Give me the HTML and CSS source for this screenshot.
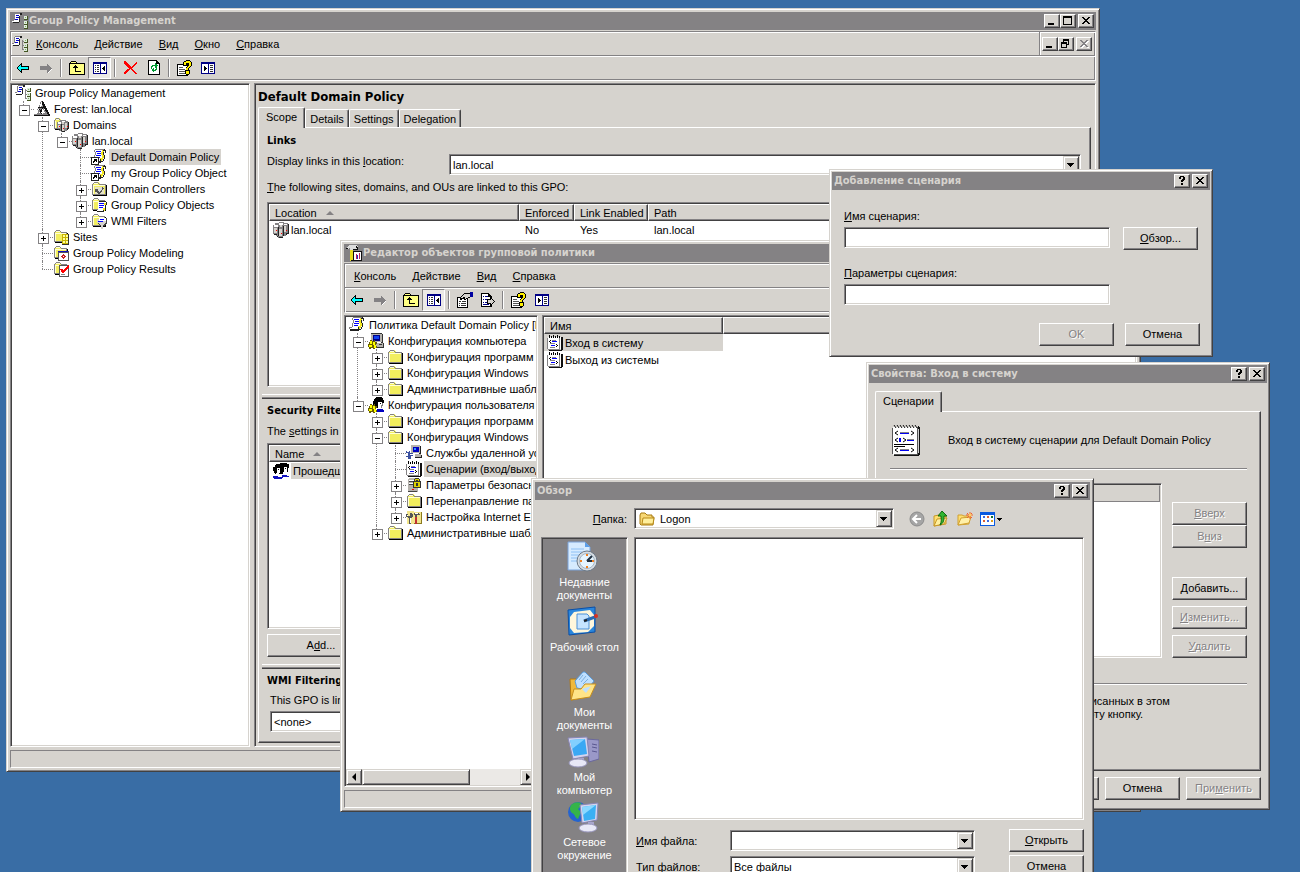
FILE: index.html
```html
<!DOCTYPE html>
<html lang="ru">
<head>
    <meta charset="UTF-8">
    <meta name="viewport" content="width=device-width, initial-scale=1.0">
    <title>Group Policy Management</title>
    <link rel="stylesheet" href="styles.css">
</head>
<body>
    <!-- icons -->
    <svg class="sprite" aria-hidden="true">
        <symbol id="i-gpm" viewBox="0 0 16 16">
            <path d="M3 0h7v2h-2v5h-1v2H0V7h2V2h1z" fill="#fff"/>
            <path d="M3 0h6v1H3zM2 1h1v6H2zM0 7h2v1H0z" fill="#848284"/>
            <path d="M4 2h3v1H4zM4 4h3v1H4zM3 6h3v1H3z" fill="#00c"/>
            <path d="M8 0h2v2H8zM7 3h1v4H7zM1 9h6v1H1zM7 7h1v2H7z" fill="#222"/>
            <path d="M10 4h1v10h-1zM10 5h3v1h-3zM10 9h3v1h-3zM10 13h3v1h-3z" fill="#848284"/>
            <path d="M12 3h3v3h-3zM12 8h3v3h-3zM12 12h3v3h-3z" fill="#ded"/>
            <path d="M15 3h1v4h-4V6h3zM15 8h1v4h-4v-1h3zM15 12h1v4h-4v-1h3z" fill="#452"/>
            <path d="M13 4h1v1h-1zM13 9h1v1h-1zM13 13h1v1h-1z" fill="#8a6"/>
        </symbol>
        <symbol id="i-forest" viewBox="0 0 16 16">
            <path d="M7 0h2l2 5 5 9v1H0v-1l5-8z" fill="#848284"/>
            <path d="M7 1h1v3l-2 2zM4 8l1 0-2 5H1zM10 8l1 0-2 5H8z" fill="#fff"/>
            <path d="M8 7l3 5H5z" fill="#fff"/>
            <path d="M8 0h1l3 6 4 8v1H0v-1h14L10 7 8 3zM4 6h7v1H4zM5 8h1l2 5H7zM8 7h1l-2 5H6z" fill="#111"/>
        </symbol>
        <symbol id="i-folder" viewBox="0 0 16 16">
            <path d="M3 1h4l2 2h6v11H1V3h1z" fill="#f2ee5e"/>
            <path d="M3 1h4v1H3zM2 2h1v1H2zM7 2h1v1H7zM8 3h7v1H8zM1 3h1v11H1z" fill="#848284"/>
            <path d="M3 2h4v1H3zM2 4h12v1H2zM2 5h1v8H2z" fill="#ffffd6"/>
            <path d="M14 4h1v9h-1zM2 13h13v1H2z" fill="#848284"/>
            <path d="M15 4h1v11H2v-1h13z" fill="#000"/>
        </symbol>
        <symbol id="i-server" viewBox="0 0 16 16">
            <path d="M6 0h5v1h4v11h-2v2h-3v2H5v-2H3v-2H0V3h2V1h4z" fill="#848284"/>
            <path d="M6 1h4v2H6zM11 2h3v1h-3zM1 3h4v2H1z" fill="#fff"/>
            <path d="M1 6h3v5H1zM6 7h3v7H6zM11 4h2v6h-2zM7 3h2v2H7z" fill="#d6d3ce"/>
            <path d="M5 5h1v9H5zM10 4h1v10h-1zM15 2h1v10h-2v1h-1v-2h2zM4 14h1v1H4zM6 15h4v1H6zM1 12h3v1H1z" fill="#222"/>
            <path d="M3 8h1v1H3zM8 11h1v1H8zM13 8h1v1h-1z" fill="#f00"/>
        </symbol>
        <symbol id="i-domains" viewBox="0 0 16 16">
            <use href="#i-folder" width="14" height="14"/>
            <use href="#i-server" x="4" y="3" width="12" height="12"/>
        </symbol>
        <symbol id="i-scroll" viewBox="0 0 16 16">
            <path d="M4 1h9v1h-2v3l-1 4v3H1v-2h2l1-4z" fill="#fff"/>
            <path d="M4 0h9v1H4zM3 1h1v2H3zM4 3h1v3H4zM3 6h1v4H3zM0 10h3v1H0zM0 11h1v1H0z" fill="#848284"/>
            <path d="M5 2h5v1H5zM6 4h4v1H6zM5 6h5v1H5zM5 8h4v1H5z" fill="#00f"/>
            <path d="M11 1h2v2h-2zM10 3h2v3h-2zM11 6h2v3h-2zM9 9h3v2h-1v2H9z" fill="#f6ea20"/>
            <path d="M13 0h1v1h1v3h-1V2h-2V1h1zM12 3h1v3h-1zM13 6h1v4h-1zM12 10h1v2h-1zM1 12h8v-2h1v2h2v1h-2v1H1z" fill="#222"/>
        </symbol>
        <symbol id="i-link" viewBox="0 0 16 16">
            <use href="#i-scroll" width="16" height="16"/>
            <path d="M0 8h8v8H0z" fill="#222"/><path d="M1 9h6v6H1z" fill="#fff"/>
            <path d="M3 10h3v3H5v-1H4v1H3v1H2v-2h1v-1h1V11H3z" fill="#000"/>
        </symbol>
        <symbol id="i-dc" viewBox="0 0 16 16">
            <use href="#i-folder" width="16" height="16"/>
            <path d="M4 6h9v7H4z" fill="#e6e3c8"/><path d="M5 12l6-6 2 1-4 6zM4 8h3v3H4z" fill="#555"/><path d="M7 9l4-3v2l-3 3z" fill="#ddd"/>
        </symbol>
        <symbol id="i-gpos" viewBox="0 0 16 16">
            <use href="#i-folder" width="15" height="15"/>
            <path d="M7 5h8v2h-1v5h-1v3H6v-2h1z" fill="#fff"/><path d="M8 6h5v1H8zM8 8h5v1H8zM8 10h4v1H8z" fill="#00f"/>
            <path d="M13 6h2v2h-2zM12 11h2v3h-2z" fill="#f6ea20"/><path d="M15 5h1v3h-1zM14 8h1v5h-1zM6 14h6v-1h1v2H6zM7 5h1V4h7v1z" fill="#222"/>
        </symbol>
        <symbol id="i-wmi" viewBox="0 0 16 16">
            <use href="#i-folder" width="15" height="15"/>
            <path d="M6 6h9v4l-3 3v3h-2v-3L6 10z" fill="#d6d3ce"/><path d="M8 5h7v3H8z" fill="#fff"/>
            <path d="M9 6h4v1H9zM7 8h5v1H7z" fill="#00f"/><path d="M15 5h1v5l-3 3h-1l3-4zM6 10l4 4v-1L7 9z" fill="#444"/>
        </symbol>
        <symbol id="i-sites" viewBox="0 0 16 16">
            <use href="#i-folder" width="15" height="15"/>
            <path d="M9 5h7v11H9z" fill="#c8b400"/>
            <path d="M10 6h2v2h-2zM13 6h2v2h-2zM10 9h2v2h-2zM13 9h2v2h-2zM10 12h2v2h-2zM13 12h2v2h-2z" fill="#ffff9c"/>
            <path d="M15 5h1v11H9v-1h6z" fill="#333"/>
        </symbol>
        <symbol id="i-model" viewBox="0 0 16 16">
            <use href="#i-folder" width="15" height="15"/>
            <path d="M5 6h11v10H5z" fill="#555"/><path d="M6 8h9v7H6z" fill="#fff"/><path d="M5 6h10v1H5z" fill="#1010c0"/>
            <path d="M10 9h1v1h1v1h1v1h-1v1h-1v1h-1v-1H9v-1H8v-1h1v-1h1z" fill="#c42020"/><path d="M10 11h1v1h-1z" fill="#fff"/>
        </symbol>
        <symbol id="i-results" viewBox="0 0 16 16">
            <use href="#i-folder" width="15" height="15"/>
            <path d="M6 4h10v12H6z" fill="#555"/><path d="M7 5h8v10H7z" fill="#fff"/>
            <path d="M8 8l2 3 6-6" stroke="#f00" stroke-width="2" fill="none"/><path d="M8 13h4v1H8z" fill="#848284"/>
        </symbol>
        <symbol id="i-computer" viewBox="0 0 16 16">
            <path d="M3 0h11v9H3zM2 10h13v4H2z" fill="#b5b2ad"/><path d="M5 2h7v6H5z" fill="#000084"/>
            <path d="M6 3h5v3H6z" fill="#1040f0"/>
            <path d="M14 1h1v9h-2V9h1zM15 10h1v5H5v-1h10zM11 11h3v1h-3zM3 0h11v1H3z" fill="#333"/>
            <path d="M2 7h2v1h2V7h1v2h2v2h-1v2h1v2H7v1H5v-1H3v1H1v-2H0v-3h1V9h1z" fill="#6a6000"/>
            <path d="M2 8h2v3H2zM5 9h2v3H5zM1 12h3v2H1zM6 12h2v3H6z" fill="#ff0"/>
        </symbol>
        <symbol id="i-user" viewBox="0 0 16 16">
            <path d="M7 1h1V0h6v1h1v2h1v3h-2V5h-3v2h-1v4H8V9H5V4h1V2h1z" fill="#000"/>
            <path d="M10 5h4v6h-1v1h-3z" fill="#fff"/><path d="M12 6h1v1h-1z" fill="#000"/><path d="M14 6h1v3h-1v2h-1V8h1z" fill="#848284"/>
            <path d="M9 12h5l2 2v1H9z" fill="#0000c0"/>
            <path d="M2 7h2v1h2V7h1v2h2v2h-1v2h1v2H7v1H5v-1H3v1H1v-2H0v-3h1V9h1z" fill="#6a6000"/>
            <path d="M2 8h2v3H2zM5 9h2v3H5zM1 12h3v2H1zM6 12h2v3H6z" fill="#ff0"/>
        </symbol>
        <symbol id="i-group" viewBox="0 0 16 16">
            <path d="M2 2h1V1h4V0h7v1h2v4h-1v4h-2v2H2v-1H1V8H0V4h2z" fill="#000"/>
            <path d="M4 5h3v5H6v2H3v-2h1zM11 4h3v5h-1v2h-3V9h1z" fill="#fff"/><path d="M5 6h1v1H5zM12 5h1v1h-1z" fill="#000"/>
            <path d="M0 13h4l2 1 3-2h3l4 1v1h-5l-3 2H1z" fill="#1010c0"/><path d="M7 12h2v2H7z" fill="#fff"/>
        </symbol>
        <symbol id="i-ris" viewBox="0 0 16 16">
            <path d="M5 0h9v8H5zM9 9h6v3H9z" fill="#b5b2ad"/><path d="M7 2h6v5H7z" fill="#0000c0"/><path d="M8 3h2v2H8z" fill="#39f"/>
            <path d="M14 1h1v8h-2V8h1zM15 10h1v3H9v-1h6z" fill="#222"/>
            <path d="M0 6h4v2h3v3H5v3H2v-2H0v-1h2V8H0z" fill="#3a50a0"/><path d="M1 6h2v1H1zM4 9h3v1H4z" fill="#fff"/>
        </symbol>
        <symbol id="i-script" viewBox="0 0 16 16">
            <path d="M1 2h12v13H1z" fill="#fff"/>
            <path d="M0 3h1v11H0zM1 14h12v1H1zM12 3h1v11h-1z" fill="#848284"/>
            <path d="M14 2h2v13h-1v1H2v-1h12z" fill="#111"/><path d="M13 2h1v12h-1z" fill="#fff"/>
            <path d="M2 0h1v3H2zM4 1h1v2H4zM6 0h1v3H6zM8 1h1v2H8zM10 0h1v3h-1zM12 1h1v2h-1zM3 5h1v1H3zM2 6h1v1H2zM3 7h1v1H3zM9 9h1v1H9zM10 10h1v1h-1zM9 11h1v1H9z" fill="#000"/>
            <path d="M5 6h5v1H5zM4 10h4v1H4z" fill="#00f"/><path d="M5 5h4v1H5zM3 8h5v1H3zM3 12h5v1H3z" fill="#848284"/>
        </symbol>
        <symbol id="i-script-big" viewBox="0 0 32 32">
            <path d="M3 3h24v28H3z" fill="#fff"/><path d="M2 4h1v26H2zM27 3h1v28H4v-1h23z" fill="#555"/>
            <path d="M28 2h1v1h1v28h-1v1H4v-1h24z" fill="#111"/><path d="M28 5h1v24h-1z" fill="#ccc"/>
            <path d="M4 1l2 3M7 1l2 3M10 1l2 3M13 1l2 3M16 1l2 3M19 1l2 3M22 1l2 3M25 1l2 3" stroke="#111"/>
            <path d="M8 7L5 9l3 2M21 7l3 2-3 2M8 14l-3 2 3 2M13 14l3 2-3 2M8 24l-3 2 3 2M21 24l3 2-3 2" fill="none" stroke="#000"/>
            <path d="M10 9h9v1h-9zM9 14h2v4H9zM17 16h7v1h-7zM10 26h9v1h-9z" fill="#0000f0"/><path d="M10 8h9v1h-9zM17 15h7v1h-7zM10 25h9v1h-9z" fill="#848284"/><path d="M4 20h20v1H4zM4 22h11v1H4z" fill="#000"/>
        </symbol>
        <symbol id="i-security" viewBox="0 0 16 16">
            <path d="M3 1h8v1h1v13H3v-1H2V2h1z" fill="#b5b2ad"/><path d="M3 3h7v1H3zM3 6h6v1H3z" fill="#fff"/><path d="M3 4h6v1H3zM3 7h5v1H3zM2 14h9v1H2z" fill="#444"/>
            <path d="M6 12h2v1H6z" fill="#f00"/><path d="M8 4V2h1V1h4v1h1v2h1v7H7V4z" fill="#333"/><path d="M9 2h4v2h-1V3h-2v1H9zM8 5h6v5H8z" fill="#dcd000"/><path d="M10 6h2v3h-2z" fill="#333"/>
        </symbol>
        <symbol id="i-ie" viewBox="0 0 16 16">
            <path d="M1 2h6l1 1h8v12H1z" fill="#f2e58c"/><path d="M15 3h1v12H8v-1h7z" fill="#8a7a20"/>
            <path d="M0 5h2v2h2V4l3 1v3L5 9v6H3V9L0 8zM8 4h5l1 2h-3v2H9V6H8z" fill="#555"/><path d="M1 6h1v1H1zM4 9h1v5H4zM9 4h3v1H9z" fill="#fff"/><path d="M9 8h2v7H9z" fill="#c03030"/>
        </symbol>
        <symbol id="i-editor" viewBox="0 0 16 16">
            <path d="M1 2l3-2h6l2 2v2H7v1H4V3L2 4H0z" fill="#ddd"/><path d="M10 1h1l1 2v2H7V4h4zM0 3h2v1H0z" fill="#111"/>
            <path d="M4 5h3v11H4z" fill="#e8dc20"/><path d="M7 6h1v10H5v-1h2z" fill="#111"/>
            <path d="M8 7h8v8H8z" fill="#fff"/><path d="M8 6h8v1H8zM15 7h1v9H8v-1h7z" fill="#111"/><path d="M10 9h1v5h-1zM13 8h1v6h-1z" fill="#c02060"/><path d="M11 10h1v4h-1z" fill="#2030c0"/>
        </symbol>
        <symbol id="t-back" viewBox="0 0 16 16">
            <path d="M1 8h1V7h1V6h1V5h1V4h1V3h1v3h7v4H7v3H6v-1H5v-1H4v-1H3V9H2z" fill="#000"/>
            <path d="M3 8V7h1V6h1V5h1v2h7v2H6v2H5v-1H4V9H3z" fill="#0ff"/>
        </symbol>
        <symbol id="t-forward" viewBox="0 0 16 16">
            <path d="M15 8v1h-1v1h-1v1h-1v1h-1v1h-1v-3H3v-1h11z" fill="#fff"/>
            <path d="M14 8h-1V7h-1V6h-1V5h-1V4H9v2H2v4h7v3h1v-1h1v-1h1v-1h1V9h1z" fill="#848284"/>
        </symbol>
        <symbol id="t-up" viewBox="0 0 16 16">
            <path d="M1 2h1V1h5v1h1v1h8v12H0V3h1z" fill="#000"/><path d="M2 2h5v1H2zM1 4h14v10H1z" fill="#ffff84"/>
            <path d="M6 5h1v1h1v1h1v1H7v3h5v1H6V8H4V7h1V6h1z" fill="#000"/>
        </symbol>
        <symbol id="t-tree" viewBox="0 0 16 16">
            <path d="M1 2h14v12H1z" fill="#000084"/><path d="M2 4h6v9H2zM9 4h5v9H9z" fill="#fff"/>
            <path d="M3 5h1v1H3zM3 7h1v1H3zM3 9h1v1H3zM3 11h1v1H3zM5 5h2v1H5zM5 7h2v1H5zM5 9h2v1H5zM5 11h2v1H5z" fill="#333"/>
            <path d="M10 8h1V7h1V6h1v5h-1v-1h-1V9h-1z" fill="#000"/>
        </symbol>
        <symbol id="t-delete" viewBox="0 0 16 16">
            <path d="M1 1h2v1h1v1h1v1h1v1h1v1h1v1h1V6h1V5h1V4h1V3h1V2h1v2h-1v1h-1v1h-1v1h-1v1H9v1h1v1h1v1h1v1h1v1h1v1h-2v-1h-1v-1h-1v-1H9v-1H8v-1H7v1H6v1H5v1H4v1H3v1H1v-2h1v-1h1v-1h1v-1h1V9h1V8H5V7H4V6H3V5H2V4H1z" fill="#f00"/>
        </symbol>
        <symbol id="t-refresh" viewBox="0 0 16 16">
            <path d="M2 0h9v1h1v1h1v1h1v12H2z" fill="#000"/><path d="M3 1h7v3h3v10H3z" fill="#fff"/>
            <path d="M5 9V6h1V5h3V3l3 3-3 2V6H7v1H6v2zM11 7v3h-1v1H8v2l-3-3 3-2v2h1V9h1V7z" fill="#009a31"/>
        </symbol>
        <symbol id="t-help" viewBox="0 0 16 16">
            <path d="M0 4h11v12H0z" fill="#000"/><path d="M1 5h9v10H1z" fill="#fff"/><path d="M2 7h4v1H2zM2 9h6v1H2zM2 11h6v1H2zM2 13h6v1H2z" fill="#555"/>
            <path d="M6 2h1V1h2V0h4v1h1v1h1v4h-1v1h-1v1h-1v2h1v4h-1v1H9v-1H8v-4h1V7h1V6h1V4h-1v2H6z" fill="#000"/>
            <path d="M7 2h2V1h4v1h1v4h-1v1h-1v1h-1v2H9V8h1V7h1V6h1V3H9v2H7zM9 11h3v3H9z" fill="#ffef00"/>
        </symbol>
        <symbol id="t-pane" viewBox="0 0 16 16">
            <path d="M1 2h14v12H1z" fill="#000084"/><path d="M2 4h6v9H2zM9 4h5v9H9z" fill="#fff"/>
            <path d="M10 5h3v1h-3zM10 7h3v1h-3zM10 9h3v1h-3zM10 11h3v1h-3z" fill="#333"/>
            <path d="M4 6h1v1h1v1h1v1H6v1H5v1H4z" fill="#000"/>
        </symbol>
        <symbol id="t-props" viewBox="0 0 16 16">
            <path d="M0 5h11v11H0z" fill="#000"/><path d="M1 6h9v9H1z" fill="#fff"/><path d="M2 9h2v1H2zM2 11h1v1H2zM2 13h1v1H2zM5 9h4v1H5zM4 11h5v1H4zM4 13h5v1H4z" fill="#333"/>
            <path d="M3 5h1V4h1V3h1V2h1V1h6v5h-2v1H9v1H7V7H5v1H3z" fill="#000"/><path d="M5 5V4h1V3h1V2h6v3h-2v1H9v1H8V5H6v1H4V5z" fill="#d6d3ce"/><path d="M13 0h3v5h-3z" fill="#0000a0"/>
        </symbol>
        <symbol id="t-export" viewBox="0 0 16 16">
            <path d="M1 1h8v1h1v1h1v1h1v11H1z" fill="#000"/><path d="M2 2h6v3h3v9H2z" fill="#fff"/>
            <path d="M3 4h1v1H3zM3 7h1v1H3zM3 10h1v1H3zM5 4h3v1H5zM5 7h3v1H5zM5 10h2v1H5zM3 12h6v1H3z" fill="#000084"/>
            <path d="M7 7h3V5h1v1h1v1h1v1h1v1h1v1h-1v1h-1v1h-1v1h-1v1h-1v-2H7z" fill="#000"/><path d="M8 8h3V7l3 2.500-3 2.500v-1H8z" fill="#d6d3ce"/>
        </symbol>
        <symbol id="w-min" viewBox="0 0 12 10"><path d="M2 7h6v2H2z"/></symbol>
        <symbol id="w-max" viewBox="0 0 12 10"><path d="M1 0h9v9H1zM2 2v6h7V2z" fill-rule="evenodd"/></symbol>
        <symbol id="w-restore" viewBox="0 0 12 10"><path d="M3 0h6v6H7v3H1V3h2zM4 2v1h3v2h1V2zM2 5v3h4V5z" fill-rule="evenodd"/></symbol>
        <symbol id="w-close" viewBox="0 0 12 10"><path d="M2 1h2v1h1v1h2V2h1V1h2v1H9v1H8v1H7v1h1v1h1v1h1v1H8V7H7V6H5v1H4v1H2V7h1V6h1V5h1V4H4V3H3V2H2z"/></symbol>
        <symbol id="w-help" viewBox="0 0 12 10"><path d="M3 1h1V0h4v1h1v3H8v1H7v1H5V4h1V3h1V1H5v2H3zM5 7h2v2H5z"/></symbol>
        <symbol id="a-down" viewBox="0 0 8 4"><path d="M0 0h7v1H6v1H5v1H4v1H3V3H2V2H1V1H0z"/></symbol>
        <symbol id="f-folder" viewBox="0 0 16 16">
            <path d="M1 4l1-2h4l2 2h5v2h2l-1 8H2L1 13z" fill="#f7d774" stroke="#a87b10"/><path d="M3 13l1-6h11l-1 6z" fill="#ffef9c" stroke="#b88a18"/>
        </symbol>
        <symbol id="f-back" viewBox="0 0 16 16">
            <circle cx="8" cy="8" r="7" fill="#a5a5a5" stroke="#8c8c8c"/><path d="M12 8H5M8 4L4 8l4 4" stroke="#fff" stroke-width="2" fill="none"/>
        </symbol>
        <symbol id="f-up" viewBox="0 0 16 16">
            <path d="M1 5l5-1 1 1h6v8L1 15z" fill="#ffe070" stroke="#c89828"/><path d="M1 15l3-7 10-1-3 6z" fill="#fff0a0" stroke="#c89828"/>
            <path d="M9 0l5 5h-3c0 4 0 7-4 9 2-4 1-6 1-9H5z" fill="#31b531" stroke="#106a10"/>
        </symbol>
        <symbol id="f-new" viewBox="0 0 16 16">
            <path d="M1 4h4l2 1h5v8L1 14z" fill="#ffdf70" stroke="#d0a030"/><path d="M1 14l3-7 10-1-2 6z" fill="#fff0a8" stroke="#d0a030"/>
            <path d="M13 1v7M9 4h7M10 2l5 5M15 2l-5 5" stroke="#f06030"/><circle cx="13" cy="4" r="1.500" fill="#ffd060"/>
        </symbol>
        <symbol id="f-views" viewBox="0 0 24 16">
            <path d="M0 1h15v14H0z" fill="#0a5ae0"/><path d="M1 4h13v10H1z" fill="#fff"/>
            <path d="M3 5h2v2H3zM7 9h2v2H7z" fill="#3a6ae0"/><path d="M7 5h2v2H7zM3 9h2v2H3z" fill="#e06030"/><path d="M11 5h2v2h-2z" fill="#107030"/><path d="M11 9h2v2h-2z" fill="#e0a020"/>
            <path d="M17 7h5v1h-1v1h-1v1h-1V9h-1V8h-1z"/>
        </symbol>
        <symbol id="p-recent" viewBox="0 0 32 32">
            <path d="M1 1h17l5 5v23H1z" fill="#d6ebff" stroke="#7ba2d8"/><path d="M18 1v5h5" fill="#5b9ee8"/>
            <path d="M4 8h13M4 11h11M4 14h8M4 17h7M4 20h6" stroke="#8ec0f4"/>
            <circle cx="20" cy="20" r="10" fill="#d8dde2" stroke="#6d7a88"/><circle cx="20" cy="20" r="7.500" fill="#e6f5ff" stroke="#a4b6c6"/>
            <path d="M20 20l5-5M20 20h6" stroke="#203040" stroke-width="2"/><path d="M20 13v2M13 20h2M20 25v2M25 20h2" stroke="#f08020" stroke-width="2"/>
        </symbol>
        <symbol id="p-desktop" viewBox="0 0 32 32">
            <path d="M1 4l27-3v25L2 29z" fill="#2a86dc" stroke="#0b4fa6"/><path d="M7 6l16-2 4 5v11l-6 6-14 1-4-5V11z" fill="#fff7dc"/>
            <path d="M10 8h10l2 2v13H10z" fill="#c6e4ff" stroke="#4a90d8"/><path d="M17 15l11-4" stroke="#2a6ab0" stroke-width="3"/><path d="M17 15l3-1" stroke="#222" stroke-width="2"/><circle cx="29" cy="10" r="2" fill="#d83020"/>
        </symbol>
        <symbol id="p-docs" viewBox="0 0 32 32">
            <path d="M3 8h6l3 3h9v15L4 29z" fill="#f0b93c" stroke="#b47a10"/><path d="M8 10l8-9h2l9 9-7 9-10-2z" fill="#bfe0ff" stroke="#5a9ad8"/>
            <path d="M12 9l4-5M14 11l5-6M16 13l5-5" stroke="#7ab0e0"/><path d="M4 29l3-11 7 0 4-5h11l-6 13z" fill="#ffe487" stroke="#c88f1c"/><path d="M15 18l9-3-5 7z" fill="#bfe0ff"/>
        </symbol>
        <symbol id="p-computer" viewBox="0 0 32 32">
            <path d="M20 3l12 1v19l-10 3z" fill="#9a98c8" stroke="#6a689c"/><path d="M25 8l5 1M25 11l5 1M25 15l5 1" stroke="#5a5890"/>
            <path d="M1 2l19-1 2 19-16 3z" fill="#d4d4ee" stroke="#8886b4"/><path d="M3 4l15-1 2 15-13 2z" fill="#3aa8f4"/><path d="M3 4l15-1-13 10z" fill="#82d0ff"/>
            <path d="M11 22h6v4h-6z" fill="#a8a6cc"/><ellipse cx="11" cy="27" rx="9" ry="4" fill="#e8e8f6" stroke="#9896bc"/>
        </symbol>
        <symbol id="p-network" viewBox="0 0 32 32">
            <circle cx="11" cy="11" r="10" fill="#2464d0"/><path d="M4 4c5-4 10-3 11 0l-4 4 3 3-3 7c-3-1-3-5-6-6-3-3-2-6-1-8z" fill="#35b44a"/>
            <path d="M13 4l18-2-1 17-15 3z" fill="#d4d4ee" stroke="#8886b4"/><path d="M15 6l14-2-1 14-11 2z" fill="#3ab0f4"/><path d="M15 6l14-2-13 10z" fill="#8ad8ff"/>
            <path d="M21 21h6v5h-6z" fill="#a8a6cc"/><ellipse cx="21" cy="27" rx="9" ry="4" fill="#e8e8f6" stroke="#9896bc"/>
        </symbol>
    </svg>

    <main class="desktop">
        <!-- main console -->
        <section class="window console-main">
            <header class="titlebar">
                <svg class="icon"><use href="#i-gpm"/></svg>
                <h1>Group Policy Management</h1>
                <button class="sys" aria-label="Свернуть"><svg><use href="#w-min"/></svg></button>
                <button class="sys" aria-label="Развернуть"><svg><use href="#w-max"/></svg></button>
                <button class="sys sys-close" aria-label="Закрыть"><svg><use href="#w-close"/></svg></button>
            </header>
            <div class="bars">
                <nav class="menubar">
                    <svg class="icon"><use href="#i-gpm"/></svg>
                    <a href="#"><u>К</u>онсоль</a>
                    <a href="#"><u>Д</u>ействие</a>
                    <a href="#"><u>В</u>ид</a>
                    <a href="#"><u>О</u>кно</a>
                    <a href="#"><u>С</u>правка</a>
                    <div class="mdi">
                        <button class="sys" aria-label="Свернуть окно"><svg><use href="#w-min"/></svg></button>
                        <button class="sys" aria-label="Восстановить окно"><svg><use href="#w-restore"/></svg></button>
                        <button class="sys sys-close" aria-label="Закрыть окно" disabled><svg><use href="#w-close"/></svg></button>
                    </div>
                </nav>
                <div class="toolbar">
                    <button class="tool" aria-label="Назад"><svg class="icon"><use href="#t-back"/></svg></button>
                    <button class="tool" aria-label="Вперед"><svg class="icon"><use href="#t-forward"/></svg></button>
                    <span class="sep"></span>
                    <button class="tool" aria-label="Вверх"><svg class="icon"><use href="#t-up"/></svg></button>
                    <button class="tool pressed" aria-label="Дерево консоли"><svg class="icon"><use href="#t-tree"/></svg></button>
                    <span class="sep"></span>
                    <button class="tool" aria-label="Удалить"><svg class="icon"><use href="#t-delete"/></svg></button>
                    <button class="tool" aria-label="Обновить"><svg class="icon"><use href="#t-refresh"/></svg></button>
                    <span class="sep"></span>
                    <button class="tool" aria-label="Справка"><svg class="icon"><use href="#t-help"/></svg></button>
                    <button class="tool" aria-label="Панель действий"><svg class="icon"><use href="#t-pane"/></svg></button>
                </div>
            </div>
            <div class="panes">
                <div class="tree-pane sunken">
                    <ul class="tree">
                        <li>
                            <div class="node root"><svg class="icon"><use href="#i-gpm"/></svg><span>Group Policy Management</span></div>
                            <ul>
                                <li>
                                    <div class="node"><i class="minus"></i><svg class="icon"><use href="#i-forest"/></svg><span>Forest: lan.local</span></div>
                                    <ul>
                                        <li>
                                            <div class="node"><i class="minus"></i><svg class="icon"><use href="#i-domains"/></svg><span>Domains</span></div>
                                            <ul>
                                                <li>
                                                    <div class="node"><i class="minus"></i><svg class="icon"><use href="#i-server"/></svg><span>lan.local</span></div>
                                                    <ul>
                                                        <li><div class="node"><i></i><svg class="icon"><use href="#i-link"/></svg><span class="selected">Default Domain Policy</span></div></li>
                                                        <li><div class="node"><i></i><svg class="icon"><use href="#i-link"/></svg><span>my Group Policy Object</span></div></li>
                                                        <li><div class="node"><i class="plus"></i><svg class="icon"><use href="#i-dc"/></svg><span>Domain Controllers</span></div></li>
                                                        <li><div class="node"><i class="plus"></i><svg class="icon"><use href="#i-gpos"/></svg><span>Group Policy Objects</span></div></li>
                                                        <li><div class="node"><i class="plus"></i><svg class="icon"><use href="#i-wmi"/></svg><span>WMI Filters</span></div></li>
                                                    </ul>
                                                </li>
                                            </ul>
                                        </li>
                                        <li><div class="node"><i class="plus"></i><svg class="icon"><use href="#i-sites"/></svg><span>Sites</span></div></li>
                                        <li><div class="node"><i></i><svg class="icon"><use href="#i-model"/></svg><span>Group Policy Modeling</span></div></li>
                                        <li><div class="node"><i></i><svg class="icon"><use href="#i-results"/></svg><span>Group Policy Results</span></div></li>
                                    </ul>
                                </li>
                            </ul>
                        </li>
                    </ul>
                </div>
                <div class="gpo sunken">
                    <h2>Default Domain Policy</h2>
                    <div class="tabs">
                        <button class="tab active">Scope</button>
                        <button class="tab">Details</button>
                        <button class="tab">Settings</button>
                        <button class="tab">Delegation</button>
                    </div>
                    <div class="tab-panel scope">
                        <section class="links">
                            <h3>Links</h3>
                            <div class="location">
                                <label for="location">Display links in this <u>l</u>ocation:</label>
                                <div class="combo">
                                    <select id="location"><option>lan.local</option></select>
                                    <span class="drop"><svg><use href="#a-down"/></svg></span>
                                </div>
                            </div>
                            <p><u>T</u>he following sites, domains, and OUs are linked to this GPO:</p>
                            <div class="list sunken">
                                <table>
                                    <thead>
                                        <tr><th class="col-location">Location <b class="sort"></b></th><th class="col-enforced">Enforced</th><th class="col-enabled">Link Enabled</th><th>Path</th></tr>
                                    </thead>
                                    <tbody>
                                        <tr><td><div class="cell"><svg class="icon"><use href="#i-server"/></svg>lan.local</div></td><td class="text">No</td><td class="text">Yes</td><td class="text">lan.local</td></tr>
                                    </tbody>
                                </table>
                            </div>
                        </section>
                        <div class="splitter"></div>
                        <section class="security">
                            <h3>Security Filtering</h3>
                            <p>The <u>s</u>ettings in this GPO</p>
                            <div class="list sunken">
                                <table>
                                    <thead><tr><th>Name <b class="sort"></b></th></tr></thead>
                                    <tbody>
                                        <tr><td><div class="cell"><svg class="icon"><use href="#i-group"/></svg><span class="selected">Прошедшие проверку</span></div></td></tr>
                                    </tbody>
                                </table>
                            </div>
                            <button class="btn add-btn">A<u>d</u>d...</button>
                        </section>
                        <div class="splitter"></div>
                        <section class="wmi">
                            <h3>WMI Filtering</h3>
                            <label for="wmi">This GPO is linked</label>
                            <div class="combo">
                                <select id="wmi"><option>&lt;none&gt;</option></select>
                                <span class="drop"><svg><use href="#a-down"/></svg></span>
                            </div>
                        </section>
                    </div>
                </div>
            </div>
            <footer class="statusbar"></footer>
        </section>

        <!-- policy editor -->
        <section class="window editor">
            <header class="titlebar">
                <svg class="icon"><use href="#i-editor"/></svg>
                <h1>Редактор объектов групповой политики</h1>
            </header>
            <div class="bars">
                <nav class="menubar">
                    <a href="#"><u>К</u>онсоль</a>
                    <a href="#"><u>Д</u>ействие</a>
                    <a href="#"><u>В</u>ид</a>
                    <a href="#"><u>С</u>правка</a>
                </nav>
                <div class="toolbar">
                    <button class="tool" aria-label="Назад"><svg class="icon"><use href="#t-back"/></svg></button>
                    <button class="tool" aria-label="Вперед"><svg class="icon"><use href="#t-forward"/></svg></button>
                    <span class="sep"></span>
                    <button class="tool" aria-label="Вверх"><svg class="icon"><use href="#t-up"/></svg></button>
                    <button class="tool pressed" aria-label="Дерево консоли"><svg class="icon"><use href="#t-tree"/></svg></button>
                    <span class="sep"></span>
                    <button class="tool" aria-label="Свойства"><svg class="icon"><use href="#t-props"/></svg></button>
                    <button class="tool" aria-label="Экспорт"><svg class="icon"><use href="#t-export"/></svg></button>
                    <span class="sep"></span>
                    <button class="tool" aria-label="Справка"><svg class="icon"><use href="#t-help"/></svg></button>
                    <button class="tool" aria-label="Панель действий"><svg class="icon"><use href="#t-pane"/></svg></button>
                </div>
            </div>
            <div class="panes">
                <div class="tree-pane sunken">
                    <ul class="tree">
                        <li>
                            <div class="node root"><svg class="icon"><use href="#i-scroll"/></svg><span>Политика Default Domain Policy [lan.local]</span></div>
                            <ul>
                                <li>
                                    <div class="node"><i class="minus"></i><svg class="icon"><use href="#i-computer"/></svg><span>Конфигурация компьютера</span></div>
                                    <ul>
                                        <li><div class="node"><i class="plus"></i><svg class="icon"><use href="#i-folder"/></svg><span>Конфигурация программ</span></div></li>
                                        <li><div class="node"><i class="plus"></i><svg class="icon"><use href="#i-folder"/></svg><span>Конфигурация Windows</span></div></li>
                                        <li><div class="node"><i class="plus"></i><svg class="icon"><use href="#i-folder"/></svg><span>Административные шаблоны</span></div></li>
                                    </ul>
                                </li>
                                <li>
                                    <div class="node"><i class="minus"></i><svg class="icon"><use href="#i-user"/></svg><span>Конфигурация пользователя</span></div>
                                    <ul>
                                        <li><div class="node"><i class="plus"></i><svg class="icon"><use href="#i-folder"/></svg><span>Конфигурация программ</span></div></li>
                                        <li>
                                            <div class="node"><i class="minus"></i><svg class="icon"><use href="#i-folder"/></svg><span>Конфигурация Windows</span></div>
                                            <ul>
                                                <li><div class="node"><i></i><svg class="icon"><use href="#i-ris"/></svg><span>Службы удаленной установки</span></div></li>
                                                <li><div class="node"><i></i><svg class="icon"><use href="#i-script"/></svg><span class="selected">Сценарии (вход/выход из системы)</span></div></li>
                                                <li><div class="node"><i class="plus"></i><svg class="icon"><use href="#i-security"/></svg><span>Параметры безопасности</span></div></li>
                                                <li><div class="node"><i class="plus"></i><svg class="icon"><use href="#i-folder"/></svg><span>Перенаправление папки</span></div></li>
                                                <li><div class="node"><i class="plus"></i><svg class="icon"><use href="#i-ie"/></svg><span>Настройка Internet Explorer</span></div></li>
                                            </ul>
                                        </li>
                                        <li><div class="node"><i class="plus"></i><svg class="icon"><use href="#i-folder"/></svg><span>Административные шаблоны</span></div></li>
                                    </ul>
                                </li>
                            </ul>
                        </li>
                    </ul>
                    <div class="scrollbar">
                        <button class="scroll-left" aria-label="Влево"></button>
                        <div class="thumb"></div>
                        <div class="track"></div>
                        <button class="scroll-right" aria-label="Вправо"></button>
                    </div>
                </div>
                <div class="list sunken">
                    <table>
                        <thead><tr><th class="col-name">Имя</th><th></th></tr></thead>
                        <tbody>
                            <tr><td class="selected"><div class="cell"><svg class="icon"><use href="#i-script"/></svg>Вход в систему</div></td><td></td></tr>
                            <tr><td><div class="cell"><svg class="icon"><use href="#i-script"/></svg>Выход из системы</div></td><td></td></tr>
                        </tbody>
                    </table>
                </div>
            </div>
            <footer class="statusbar"></footer>
        </section>

        <!-- add script -->
        <form class="window dialog add-script">
            <header class="titlebar">
                <h1>Добавление сценария</h1>
                <button type="button" class="sys" aria-label="Справка"><svg><use href="#w-help"/></svg></button>
                <button type="button" class="sys sys-close" aria-label="Закрыть"><svg><use href="#w-close"/></svg></button>
            </header>
            <div class="add-body">
                <label for="script-name"><u>И</u>мя сценария:</label>
                <div class="field">
                    <input type="text" id="script-name">
                    <button type="button" class="btn"><u>О</u>бзор...</button>
                </div>
                <label for="script-params"><u>П</u>араметры сценария:</label>
                <div class="field"><input type="text" id="script-params"></div>
                <div class="actions">
                    <button type="button" class="btn" disabled>OK</button>
                    <button type="button" class="btn">Отмена</button>
                </div>
            </div>
        </form>

        <!-- logon script properties -->
        <section class="window dialog props">
            <header class="titlebar">
                <h1>Свойства: Вход в систему</h1>
                <button class="sys" aria-label="Справка"><svg><use href="#w-help"/></svg></button>
                <button class="sys sys-close" aria-label="Закрыть"><svg><use href="#w-close"/></svg></button>
            </header>
            <div class="props-body">
                <div class="tabs"><button class="tab active">Сценарии</button></div>
                <div class="tab-panel">
                    <div class="intro">
                        <svg class="icon-big"><use href="#i-script-big"/></svg>
                        <p>Вход в систему сценарии для Default Domain Policy</p>
                    </div>
                    <hr>
                    <div class="scripts">
                        <div class="list sunken"><div class="list-head"></div></div>
                        <div class="side">
                            <button class="btn" disabled><u>В</u>верх</button>
                            <button class="btn" disabled>В<u>н</u>из</button>
                            <button class="btn add"><u>Д</u>обавить...</button>
                            <button class="btn edit" disabled><u>И</u>зменить...</button>
                            <button class="btn remove" disabled><u>У</u>далить</button>
                        </div>
                    </div>
                    <hr class="low">
                    <p class="hint">Для просмотра файлов сценариев, записанных в этом<br>объекте групповой политики, нажмите эту кнопку.</p>
                </div>
                <div class="actions">
                    <button class="btn">OK</button>
                    <button class="btn">Отмена</button>
                    <button class="btn" disabled>При<u>м</u>енить</button>
                </div>
            </div>
        </section>

        <!-- file browser -->
        <form class="window browse">
            <header class="titlebar">
                <h1>Обзор</h1>
                <button type="button" class="sys" aria-label="Справка"><svg><use href="#w-help"/></svg></button>
                <button type="button" class="sys sys-close" aria-label="Закрыть"><svg><use href="#w-close"/></svg></button>
            </header>
            <div class="lookin">
                <label for="folder"><u>П</u>апка:</label>
                <div class="combo">
                    <svg class="icon"><use href="#f-folder"/></svg>
                    <select id="folder"><option>Logon</option></select>
                    <span class="drop"><svg><use href="#a-down"/></svg></span>
                </div>
                <button type="button" class="flat" aria-label="Назад"><svg class="icon"><use href="#f-back"/></svg></button>
                <button type="button" class="flat" aria-label="Вверх"><svg class="icon"><use href="#f-up"/></svg></button>
                <button type="button" class="flat" aria-label="Новая папка"><svg class="icon"><use href="#f-new"/></svg></button>
                <button type="button" class="flat" aria-label="Вид"><svg class="icon wide"><use href="#f-views"/></svg></button>
            </div>
            <div class="browse-body">
                <nav class="places sunken">
                    <a href="#"><svg class="icon-big"><use href="#p-recent"/></svg>Недавние документы</a>
                    <a href="#"><svg class="icon-big"><use href="#p-desktop"/></svg>Рабочий стол</a>
                    <a href="#"><svg class="icon-big"><use href="#p-docs"/></svg>Мои документы</a>
                    <a href="#"><svg class="icon-big"><use href="#p-computer"/></svg>Мой компьютер</a>
                    <a href="#"><svg class="icon-big"><use href="#p-network"/></svg>Сетевое окружение</a>
                </nav>
                <div class="files">
                    <div class="list sunken"></div>
                    <div class="file-row">
                        <label for="file-name"><u>И</u>мя файла:</label>
                        <div class="combo">
                            <input type="text" id="file-name">
                            <span class="drop"><svg><use href="#a-down"/></svg></span>
                        </div>
                        <button type="button" class="btn"><u>О</u>ткрыть</button>
                    </div>
                    <div class="file-row">
                        <label for="file-type"><u>Т</u>ип файлов:</label>
                        <div class="combo">
                            <select id="file-type"><option>Все файлы</option></select>
                            <span class="drop"><svg><use href="#a-down"/></svg></span>
                        </div>
                        <button type="button" class="btn">Отмена</button>
                    </div>
                </div>
            </div>
        </form>
    </main>
</body>
</html>
```
FILE: styles.css
```css
:root {
    --face: #d6d3ce;
    --shadow: #848284;
    --dark: #424142;
    --title-font: 'DejaVu Sans Condensed', 'DejaVu Sans', sans-serif;
}

* {
    margin: 0;
    padding: 0;
    box-sizing: border-box;
}

body {
    font: 11px/14px 'Liberation Sans', Arial, sans-serif;
    color: #000;
}

button, input, select {
    font: inherit;
    color: inherit;
}

a {
    color: inherit;
    text-decoration: none;
}

ul {
    list-style: none;
}

svg {
    display: block;
    flex: none;
}

.sprite {
    position: absolute;
    width: 0;
    height: 0;
}

.icon {
    width: 16px;
    height: 16px;
    shape-rendering: crispEdges;
}

.icon.wide {
    width: 24px;
}

.icon-big {
    width: 32px;
    height: 32px;
}

.desktop {
    position: relative;
    height: 100vh;
    overflow: hidden;
    background: #396da5;
}

/* windows */
.window {
    position: absolute;
    display: flex;
    flex-direction: column;
    padding: 3px;
    background: var(--face);
    border: 1px solid;
    border-color: var(--face) var(--dark) var(--dark) var(--face);
    box-shadow: inset 1px 1px #fff, inset -1px -1px var(--shadow);
}

.dialog {
    padding: 2px;
}

.console-main {
    left: 6px;
    top: 8px;
    width: 1094px;
    height: 764px;
}

.editor {
    left: 340px;
    top: 240px;
    width: 801px;
    height: 572px;
}

.add-script {
    left: 829px;
    top: 169px;
    width: 384px;
    height: 188px;
}

.props {
    left: 866px;
    top: 362px;
    width: 404px;
    height: 448px;
}

.browse {
    left: 531px;
    top: 478px;
    width: 563px;
    height: 412px;
}

.titlebar {
    display: flex;
    align-items: center;
    height: 18px;
    flex: none;
    padding: 0 2px;
    background: var(--shadow);
    color: var(--face);
}

.titlebar h1 {
    flex: 1;
    font: bold 11px/14px var(--title-font);
}

.titlebar .icon + h1 {
    padding-left: 1px;
}

.sys {
    width: 16px;
    height: 14px;
    padding: 1px;
    background: var(--face);
    border: 1px solid;
    border-color: #fff var(--dark) var(--dark) #fff;
    box-shadow: inset -1px -1px var(--shadow);
}

.sys svg {
    width: 12px;
    height: 10px;
    shape-rendering: crispEdges;
}

.sys:disabled svg {
    fill: var(--shadow);
    filter: drop-shadow(1px 1px #fff);
}

.sys-close {
    margin-left: 2px;
}

/* menu and toolbar */
.bars {
    margin-top: 1px;
    border: 1px solid;
    border-color: var(--shadow) #fff #fff var(--shadow);
    box-shadow: inset 1px 1px #fff, inset -1px -1px var(--shadow);
}

.menubar {
    display: flex;
    align-items: center;
    height: 24px;
    padding-left: 1px;
    border-bottom: 1px solid var(--shadow);
}

.menubar a {
    padding: 0 8px;
}

.mdi {
    display: flex;
    align-items: center;
    align-self: stretch;
    margin-left: auto;
    padding: 0 3px 0 2px;
    border-left: 1px solid var(--shadow);
    box-shadow: inset 1px 0 #fff;
}

.toolbar {
    display: flex;
    align-items: flex-start;
    height: 24px;
    border-top: 1px solid #fff;
}

.tool {
    display: grid;
    place-items: center;
    width: 23px;
    height: 22px;
    background: none;
    border: 1px solid transparent;
}

.tool.pressed {
    border-color: var(--shadow) #fff #fff var(--shadow);
    background: #ebe9e6;
}

.sep {
    width: 2px;
    height: 18px;
    margin: 2px 3px;
    border-left: 1px solid var(--shadow);
    border-right: 1px solid #fff;
}

.sunken {
    border: 1px solid;
    border-color: var(--shadow) #fff #fff var(--shadow);
    box-shadow: inset 1px 1px var(--dark), inset -1px -1px var(--face);
    padding: 1px;
}

.panes {
    display: flex;
    flex: 1;
    gap: 4px;
    min-height: 0;
    margin-top: 2px;
}

.statusbar {
    height: 18px;
    margin-top: 3px;
    border: 1px solid;
    border-color: var(--shadow) #fff #fff var(--shadow);
}

/* tree */
.tree-pane {
    display: flex;
    flex-direction: column;
    width: 240px;
    flex: none;
    background: #fff;
}

.editor .tree-pane {
    width: 194px;
}

.tree {
    flex: 1;
    overflow: hidden;
    white-space: nowrap;
}

.tree ul {
    margin-left: 19px;
}

.tree > li > ul {
    margin-left: 7px;
}

.tree ul > li {
    position: relative;
}

.tree ul > li::before {
    content: "";
    position: absolute;
    left: 4px;
    top: 0;
    bottom: 0;
    border-left: 1px dotted var(--shadow);
}

.tree ul > li:last-child::before {
    bottom: auto;
    height: 8px;
}

.node {
    display: flex;
    align-items: center;
    height: 16px;
}

.node.root {
    padding-left: 3px;
}

.node span {
    margin-left: 2px;
    padding: 0 2px;
    line-height: 16px;
}

.node i {
    position: relative;
    width: 15px;
    height: 9px;
    flex: none;
    background: repeating-linear-gradient(90deg, var(--shadow) 0 1px, #fff 1px 2px) 4px 4px / 11px 1px no-repeat;
}

.plus::before, .minus::before {
    content: "";
    display: block;
    width: 9px;
    height: 9px;
    border: 1px solid var(--shadow);
    background: linear-gradient(#000, #000) center / 5px 1px no-repeat, #fff;
}

.plus::before {
    background: linear-gradient(#000, #000) center / 5px 1px no-repeat, linear-gradient(#000, #000) center / 1px 5px no-repeat, #fff;
}

.selected {
    background: var(--face);
}

.scrollbar {
    display: flex;
    height: 16px;
}

.scrollbar button, .thumb, .drop {
    background: var(--face);
    border: 1px solid;
    border-color: var(--face) var(--dark) var(--dark) var(--face);
    box-shadow: inset 1px 1px #fff, inset -1px -1px var(--shadow);
}

.scrollbar button {
    display: grid;
    place-items: center;
    width: 16px;
}

.scrollbar button::before {
    content: "";
    border: 4px solid transparent;
    border-left-width: 0;
    border-right-color: #000;
}

.scrollbar .scroll-right::before {
    border-width: 4px 0 4px 4px;
    border-left-color: #000;
}

.thumb {
    width: 108px;
}

.track {
    flex: 1;
    background: #ebe9e6;
}

/* lists */
.list {
    flex: 1;
    min-height: 0;
    background: #fff;
    overflow: hidden;
}

.list table {
    width: 100%;
    table-layout: fixed;
    border-collapse: separate;
    border-spacing: 0;
}

.list th {
    height: 17px;
    padding: 0 5px;
    background: var(--face);
    border: 1px solid;
    border-color: #fff var(--dark) var(--dark) #fff;
    box-shadow: inset -1px -1px var(--shadow);
    font-weight: normal;
    text-align: left;
    white-space: nowrap;
}

.list td {
    height: 17px;
    white-space: nowrap;
}

.list td.text {
    padding-left: 6px;
}

.cell {
    display: flex;
    align-items: center;
    gap: 2px;
    padding-left: 4px;
}

.editor .cell {
    padding-left: 3px;
}

.cell .selected {
    padding: 1px 2px;
}

.sort {
    display: inline-block;
    margin: 0 0 2px 6px;
    border: 4px solid transparent;
    border-top-width: 0;
    border-bottom-color: var(--shadow);
}

.col-location {
    width: 250px;
}

.col-enforced {
    width: 55px;
}

.col-enabled {
    width: 74px;
}

.col-name {
    width: 179px;
}

/* controls */
.btn {
    width: 75px;
    height: 23px;
    padding-bottom: 1px;
    background: var(--face);
    border: 1px solid;
    border-color: #fff var(--dark) var(--dark) #fff;
    box-shadow: inset -1px -1px var(--shadow);
}

.btn:disabled {
    color: var(--shadow);
    text-shadow: 1px 1px #fff;
}

.combo, .field input {
    display: flex;
    align-items: center;
    height: 21px;
    padding: 1px;
    background: #fff;
    border: 1px solid;
    border-color: var(--shadow) #fff #fff var(--shadow);
    box-shadow: inset 1px 1px var(--dark), inset -1px -1px var(--face);
}

.combo select, .combo input {
    flex: 1;
    min-width: 0;
    height: 100%;
    padding-left: 2px;
    appearance: none;
    border: none;
    background: none;
    outline: none;
}

.drop {
    display: grid;
    place-items: center;
    width: 16px;
    height: 17px;
}

.drop svg {
    width: 8px;
    height: 4px;
    shape-rendering: crispEdges;
}

.tabs {
    display: flex;
    align-items: flex-end;
    height: 20px;
}

.tab {
    height: 18px;
    padding: 0 4px;
    background: var(--face);
    border: 1px solid;
    border-color: #fff var(--dark) transparent #fff;
    border-bottom: none;
    border-radius: 2px 2px 0 0;
    box-shadow: inset -1px 0 var(--shadow);
}

.tab.active {
    z-index: 1;
    height: 21px;
    padding: 0 7px 2px;
    margin-bottom: -1px;
}

.tab-panel {
    display: flex;
    flex: 1;
    flex-direction: column;
    min-height: 0;
    border: 1px solid;
    border-color: #fff var(--dark) var(--dark) #fff;
    box-shadow: inset -1px -1px var(--shadow);
}

.actions {
    display: flex;
    justify-content: flex-end;
}

/* GPO scope page */
.gpo {
    display: flex;
    flex: 1;
    flex-direction: column;
    min-width: 0;
    padding: 4px 4px 3px 3px;
}

.gpo h2 {
    font: bold 13px/18px var(--title-font);
}

.gpo h2 + .tabs {
    margin-top: 1px;
}

.scope {
    padding: 6px 3px 10px;
}

.scope section {
    display: flex;
    flex-direction: column;
    padding: 0 6px 0 5px;
}

.scope .links, .scope .security {
    flex: 1;
    min-height: 0;
}

.scope h3 {
    font: bold 11px/14px var(--title-font);
}

.location {
    display: flex;
    margin-top: 6px;
}

.location label {
    width: 182px;
}

.location .combo {
    flex: 1;
}

.links p {
    margin: 5px 0 8px;
}

.security p {
    margin: 6px 0 5px;
}

.splitter {
    height: 5px;
    margin: 7px 0 5px;
    border-top: 1px solid #fff;
    border-bottom: 1px solid var(--dark);
    box-shadow: inset 0 -1px var(--shadow);
}

.add-btn {
    width: 108px;
    margin-top: 5px;
}

.wmi label {
    margin: 5px 0 4px;
    padding-left: 3px;
}

.wmi .combo {
    margin-left: 3px;
}

/* add script dialog */
.add-body {
    display: flex;
    flex-direction: column;
    gap: 4px;
    padding: 19px 10px 0 12px;
}

.field {
    display: flex;
    align-items: flex-start;
    gap: 13px;
    height: 23px;
}

.field + label {
    margin-top: 12px;
}

.field input {
    width: 266px;
}

.add-body .actions {
    gap: 11px;
    margin-top: 12px;
}

/* properties dialog */
.props-body {
    display: flex;
    flex: 1;
    flex-direction: column;
    padding: 8px 6px 7px;
}

.props .tab-panel {
    padding: 11px 13px 0 14px;
}

.intro {
    display: flex;
    align-items: center;
    gap: 26px;
    height: 45px;
    padding-bottom: 12px;
}

hr {
    height: 2px;
    border: none;
    border-top: 1px solid var(--shadow);
    border-bottom: 1px solid #fff;
}

.scripts {
    display: flex;
    gap: 10px;
    margin: 13px 0 25px;
}

.list-head {
    height: 17px;
    background: var(--face);
    border: 1px solid;
    border-color: var(--face) var(--shadow) var(--shadow) var(--face);
}

.side {
    display: flex;
    flex-direction: column;
    padding-top: 19px;
}

.side .add {
    margin-top: 29px;
}

.side .edit, .side .remove {
    margin-top: 6px;
}

.hint {
    margin-top: 10px;
    line-height: 13px;
    white-space: nowrap;
}

.props .actions {
    gap: 6px;
    margin-top: 6px;
}

/* file dialog */
.lookin {
    display: flex;
    align-items: center;
    margin: 8px 6px;
}

.lookin label {
    width: 86px;
    margin-right: 7px;
    text-align: right;
}

.lookin .combo {
    width: 260px;
    margin-right: 11px;
}

.lookin .combo .icon {
    margin: 0 3px;
}

.lookin .icon {
    shape-rendering: auto;
}

.flat {
    display: grid;
    place-items: center;
    min-width: 24px;
    height: 21px;
    background: none;
    border: none;
}

.flat .wide {
    margin-left: 3px;
}

.browse-body {
    display: flex;
    flex: 1;
    gap: 6px;
    padding: 0 6px 8px;
}

.places {
    width: 87px;
    background: var(--shadow);
    color: #fff;
    text-align: center;
    line-height: 13px;
}

.places a {
    display: flex;
    flex-direction: column;
    align-items: center;
    gap: 3px;
    height: 65px;
    padding: 2px 8px 0;
}

.places a:nth-child(2) {
    padding: 2px 0 0;
}

.places .icon-big {
    margin-right: 3px;
}

.files {
    display: flex;
    flex: 1;
    flex-direction: column;
}

.file-row {
    display: flex;
    align-items: center;
    margin-top: 3px;
}

.list + .file-row {
    margin-top: 9px;
}

.file-row label {
    width: 96px;
    padding-left: 2px;
}

.file-row .combo {
    width: 245px;
}

.file-row .btn {
    margin-left: auto;
}
```
